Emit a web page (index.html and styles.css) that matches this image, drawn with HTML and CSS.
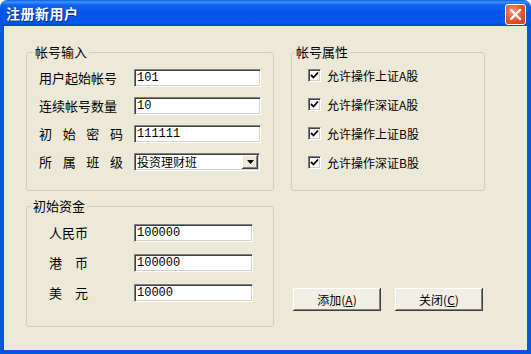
FILE: index.html
```html
<!DOCTYPE html>
<html>
	<head>
		<meta charset="utf-8">
		<title>注册新用户</title>
		<link rel="stylesheet" href="styles.css">
	</head>
	<body>
		<div class="window">
			<div class="titlebar">
				<span class="title">注册新用户</span>
				<span class="close">
					<svg width="21" height="21" viewBox="0 0 21 21">
						<path d="M6 6 L15 15 M15 6 L6 15" stroke="#fff" stroke-width="2.4" stroke-linecap="round"/>
					</svg>
				</span>
			</div>
			<div class="frame">
				<div class="client">
					<!--帐号输入-->
					<fieldset class="group g-account">
						<legend>帐号输入</legend>
						<div class="fields">
							<label>用户起始帐号</label>
							<input class="field" type="text" value="101">
							<label>连续帐号数量</label>
							<input class="field" type="text" value="10">
							<label class="spread">初 始 密 码</label>
							<input class="field" type="text" value="111111">
							<label class="spread">所 属 班 级</label>
							<div class="combo">
								<span class="combo-text">投资理财班</span>
								<span class="drop">
									<svg width="7" height="4" viewBox="0 0 7 4"><path d="M0 0 H7 L3.5 4 Z" fill="#000"/></svg>
								</span>
							</div>
						</div>
					</fieldset>

					<!--帐号属性-->
					<fieldset class="group g-attr">
						<legend>帐号属性</legend>
						<div class="checks">
							<div class="check"><span class="box"><svg width="9" height="9" viewBox="0 0 9 9"><path d="M1 4 L3.5 6.5 L8 1.5" stroke="#000" stroke-width="1.8" fill="none"/></svg></span>允许操作上证A股</div>
							<div class="check"><span class="box"><svg width="9" height="9" viewBox="0 0 9 9"><path d="M1 4 L3.5 6.5 L8 1.5" stroke="#000" stroke-width="1.8" fill="none"/></svg></span>允许操作深证A股</div>
							<div class="check"><span class="box"><svg width="9" height="9" viewBox="0 0 9 9"><path d="M1 4 L3.5 6.5 L8 1.5" stroke="#000" stroke-width="1.8" fill="none"/></svg></span>允许操作上证B股</div>
							<div class="check"><span class="box"><svg width="9" height="9" viewBox="0 0 9 9"><path d="M1 4 L3.5 6.5 L8 1.5" stroke="#000" stroke-width="1.8" fill="none"/></svg></span>允许操作深证B股</div>
						</div>
					</fieldset>

					<!--初始资金-->
					<fieldset class="group g-money">
						<legend>初始资金</legend>
						<div class="fields money">
							<label>人民币</label>
							<input class="field" type="text" value="100000">
							<label class="spread">港 币</label>
							<input class="field" type="text" value="100000">
							<label class="spread">美 元</label>
							<input class="field" type="text" value="10000">
						</div>
					</fieldset>

					<div class="actions">
						<button class="btn">添加(<u>A</u>)</button>
						<button class="btn">关闭(<u>C</u>)</button>
					</div>
				</div>
			</div>
		</div>
	</body>
</html>
```

FILE: styles.css
```css
body{
	margin: 0;
	background: #fff;
	font-family: "Noto Sans CJK SC", sans-serif;
}
.window{
	width: 531px;
	height: 354px;
	display: flex;
	flex-direction: column;
	border-radius: 7px 7px 0 0;
	overflow: hidden;
}
.titlebar{
	height: 26px;
	flex: none;
	display: flex;
	align-items: center;
	justify-content: space-between;
	padding: 0 5px 0 6px;
	background: linear-gradient(to bottom, #0A5FE4 0, #3D92FA 2px, #0E62EC 5px, #0055E5 13px, #0058EE 22px, #0048D2 26px);
}
.title{
	color: #fff;
	font-size: 14px;
	font-weight: bold;
	letter-spacing: 0.5px;
	text-shadow: 1px 1px #0A2A8A;
}
.close{
	width: 21px;
	height: 21px;
	box-sizing: border-box;
	border: 1px solid #fff;
	border-radius: 3px;
	background: radial-gradient(circle at 40% 35%, #F59A78 0, #E2562C 55%, #C53A12 100%);
	display: flex;
	margin-top: 2px;
}
.close svg{
	margin: -1px;
}
.frame{
	flex: 1;
	padding: 0 4px 4px;
	background: #0855E2;
	display: flex;
}
.client{
	flex: 1;
	background: #ECE9D8;
	display: grid;
	grid-template-columns: 248px 194px;
	grid-template-rows: 147px 129px;
	column-gap: 17px;
	row-gap: 7px;
	padding: 18px 0 0 22px;
}
.group{
	margin: 0;
	padding: 0 0 0 6px;
	border: 1px solid #D0CEBF;
	border-radius: 3px;
	min-width: 0;
}
legend{
	font-size: 13px;
	line-height: 16px;
	padding: 0 2px;
}
.g-attr{
	padding-left: 2px;
}
.g-money{
	padding-left: 4px;
}
.fields{
	display: grid;
	grid-template-columns: 95px 127px;
	grid-auto-rows: 18px;
	row-gap: 10px;
	align-items: center;
	padding: 9px 0 0 6px;
	font-size: 13px;
}
.fields label{
	line-height: 18px;
}
.spread{
	width: 84px;
	text-align: justify;
	text-align-last: justify;
}
.money{
	grid-template-columns: 85px 119px;
	row-gap: 12px;
	padding: 10px 0 0 18px;
}
.money .spread{
	width: 39px;
}
.field{
	height: 18px;
	width: 100%;
	box-sizing: border-box;
	margin: 0;
	padding: 0 2px;
	border: 1px solid;
	border-color: #808080 #FFFFFF #FFFFFF #808080;
	box-shadow: inset 1px 1px #404040, inset -1px -1px #D4D0C8;
	background: #fff;
	font-family: "Liberation Mono", monospace;
	font-size: 12px;
	line-height: 16px;
	color: #000;
	outline: none;
}
.combo{
	height: 18px;
	width: 126px;
	box-sizing: border-box;
	display: flex;
	align-items: center;
	border: 1px solid;
	border-color: #808080 #FFFFFF #FFFFFF #808080;
	box-shadow: inset 1px 1px #404040, inset -1px -1px #D4D0C8;
	background: #fff;
	padding: 1px 1px 1px 2px;
}
.combo-text{
	flex: 1;
	font-size: 12px;
	line-height: 16px;
}
.drop{
	width: 16px;
	height: 14px;
	background: #ECE9D8;
	box-shadow: inset -1px -1px #404040, inset 1px 1px #fff, inset -2px -2px #808080;
	display: flex;
	align-items: center;
	justify-content: center;
}
.checks{
	display: flex;
	flex-direction: column;
	gap: 13px;
	padding: 7px 0 0 14px;
}
.check{
	display: flex;
	align-items: center;
	gap: 6px;
	height: 16px;
	font-size: 12px;
}
.box{
	width: 13px;
	height: 13px;
	box-sizing: border-box;
	border: 1px solid;
	border-color: #808080 #fff #fff #808080;
	box-shadow: inset 1px 1px #404040, inset -1px -1px #D4D0C8;
	background: #fff;
	display: flex;
	align-items: center;
	justify-content: center;
}
.actions{
	align-self: end;
	display: flex;
	gap: 14px;
	padding: 0 0 16px 2px;
}
.btn{
	width: 88px;
	height: 23px;
	border: none;
	background: #F1EFE4;
	box-shadow: inset -1px -1px #404040, inset 1px 1px #fff, inset -2px -2px #808080;
	font-family: "Noto Sans CJK SC", sans-serif;
	font-size: 12px;
	color: #000;
	padding: 0;
}
```
